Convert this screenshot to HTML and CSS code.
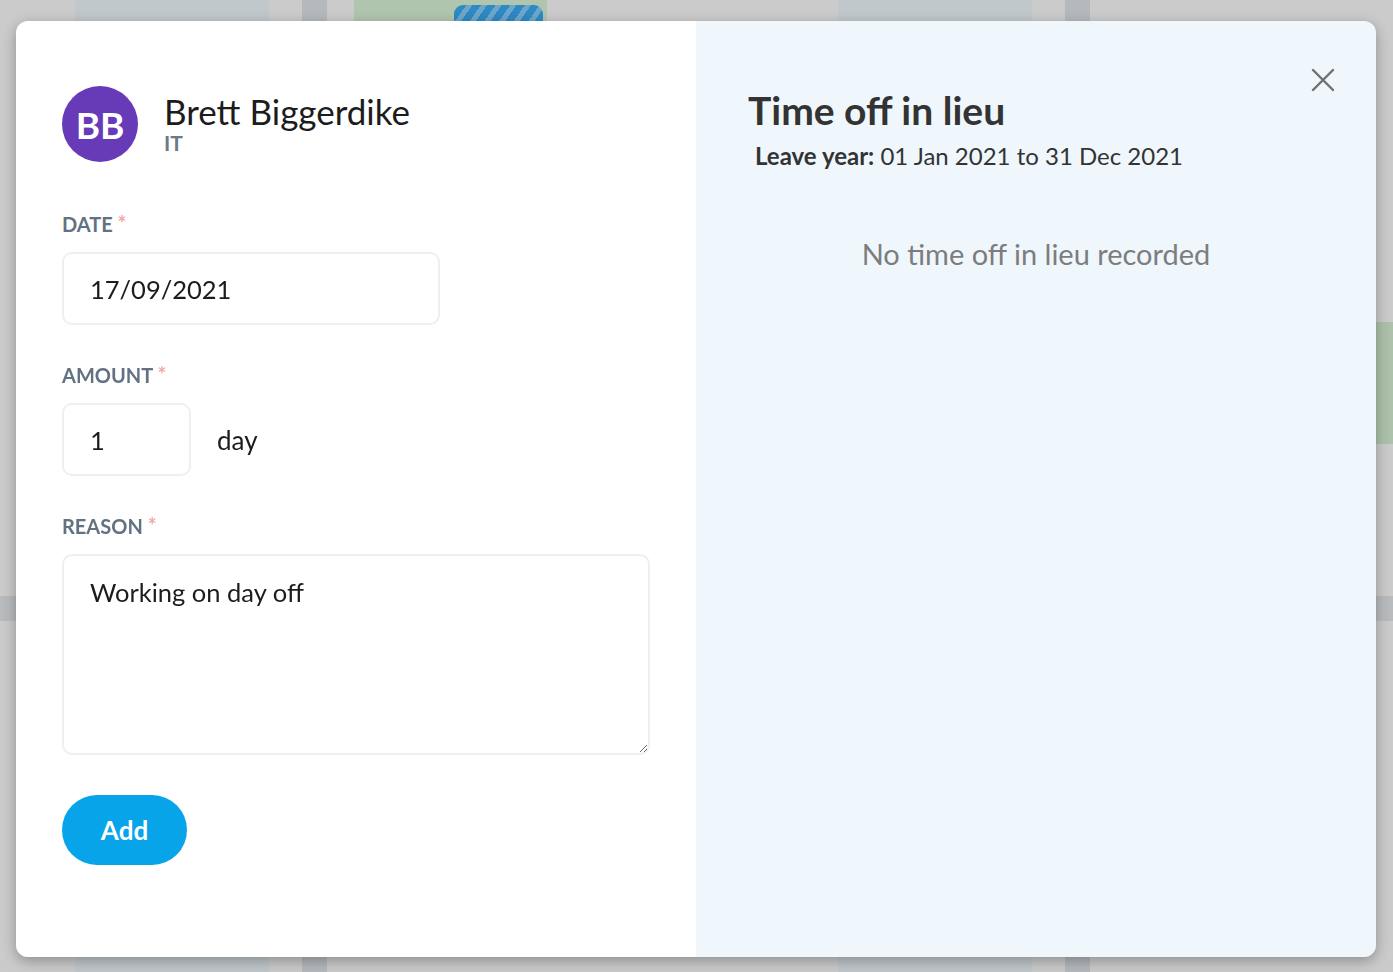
FILE: index.html
```html
<!DOCTYPE html>
<html lang="en">
<head>
  <meta charset="UTF-8" />
  <meta name="viewport" content="width=device-width, initial-scale=1.0"/>
  <title>Time off in lieu</title>
  <link rel="stylesheet" href="styles.css">
</head>
<body>
  <div class="backdrop">
    <div class="bg-row bg-top">
      <span class="blk blk-wide"></span>
      <span class="blk blk-narrow"></span>
      <span class="blk blk-green"><span class="stripe-pill"></span></span>
      <span class="blk blk-gap"></span>
      <span class="blk blk-wide"></span>
      <span class="blk blk-narrow"></span>
    </div>
    <div class="bg-mid">
      <div class="bg-space-a"></div>
      <div class="bg-green-row"><span class="bg-green-side"></span></div>
      <div class="bg-space-b"></div>
      <div class="bg-band"></div>
    </div>
    <div class="bg-row bg-bottom">
      <span class="blk blk-wide"></span>
      <span class="blk blk-narrow"></span>
      <span class="blk blk-plain"></span>
      <span class="blk blk-gap"></span>
      <span class="blk blk-wide"></span>
      <span class="blk blk-narrow"></span>
    </div>
  </div>

  <div class="modal">
    <section class="form-panel">
      <div class="person">
        <div class="avatar">BB</div>
        <div class="person-info">
          <div class="person-name">Brett Biggerdike</div>
          <div class="person-dept">IT</div>
        </div>
      </div>

      <div class="field">
        <label class="field-label">DATE <span class="req">*</span></label>
        <input class="input input-date" type="text" value="17/09/2021" />
      </div>

      <div class="field">
        <label class="field-label">AMOUNT <span class="req">*</span></label>
        <div class="amount-row">
          <input class="input input-amount" type="text" value="1" />
          <span class="unit">day</span>
        </div>
      </div>

      <div class="field">
        <label class="field-label">REASON <span class="req">*</span></label>
        <textarea class="input input-reason">Working on day off</textarea>
      </div>

      <button class="btn-add" type="button">Add</button>
    </section>

    <section class="info-panel">
      <div class="info-head">
        <div>
          <h2 class="info-title">Time off in lieu</h2>
          <p class="leave-year"><strong>Leave year:</strong> 01 Jan 2021 to 31 Dec 2021</p>
        </div>
        <button class="close" type="button" aria-label="Close">
          <svg width="24" height="24" viewBox="0 0 24 24">
            <path d="M2 2 L22 22 M22 2 L2 22" stroke="#6f6f6f" stroke-width="2.4" fill="none" stroke-linecap="round"/>
          </svg>
        </button>
      </div>
      <p class="empty">No time off in lieu recorded</p>
    </section>
  </div>
</body>
</html>
```

FILE: styles.css
```css
* {
  margin: 0;
  padding: 0;
  box-sizing: border-box;
}

body {
  height: 100vh;
  background: #cbcbcb;
  font-family: 'Lato', 'Open Sans', sans-serif;
  overflow: hidden;
}

/* dimmed page behind the dialog */
.backdrop {
  height: 100%;
  display: flex;
  flex-direction: column;
}

.bg-row {
  display: flex;
  padding-left: 75px;
}

.bg-top { height: 21px; }
.bg-bottom { height: 15px; }

.blk { display: block; height: 100%; }
.blk-wide { width: 194px; background: #c0c8cb; margin-right: 33px; }
.blk-narrow { width: 25px; background: #b5b8bc; margin-right: 27px; }
.blk-green { width: 193px; background: #b0c5ae; padding: 5px 0 0 100px; }
.blk-plain { width: 193px; }
.blk-gap { width: 291px; }

.stripe-pill {
  display: block;
  width: 89px;
  height: 100%;
  border-radius: 9px 9px 0 0;
  background: repeating-linear-gradient(-55deg, #2d8ac4 0 7px, #6ea6cb 7px 12px);
}

.bg-mid {
  flex: 1;
  display: flex;
  flex-direction: column;
}

.bg-space-a { height: 301px; }
.bg-green-row { height: 122px; display: flex; justify-content: flex-end; }
.bg-green-side { width: 40px; background: #adc2ab; }
.bg-space-b { height: 152px; }
.bg-band { height: 25px; background: #b8bcbf; }

/* dialog */
.modal {
  position: fixed;
  top: 21px;
  left: 16px;
  width: 1360px;
  height: 936px;
  display: flex;
  border-radius: 12px;
  overflow: hidden;
  box-shadow: 0 4px 14px rgba(0, 0, 0, 0.3);
}

.form-panel {
  width: 680px;
  background: #fff;
  padding: 65px 46px 0;
}

.person {
  display: flex;
  align-items: center;
  gap: 26px;
  margin-bottom: 50px;
}

.avatar {
  width: 76px;
  height: 76px;
  border-radius: 50%;
  background: #673ab7;
  color: #fff;
  font-weight: 700;
  font-size: 37px;
  display: flex;
  align-items: center;
  justify-content: center;
}

.person-name {
  font-size: 35px;
  line-height: 36px;
  color: #1c1c1c;
  margin-top: -1px;
}

.person-dept {
  font-size: 21px;
  line-height: 24px;
  color: #6a7a88;
  font-weight: 700;
  margin-top: 2px;
}

.field {
  display: flex;
  flex-direction: column;
  align-items: flex-start;
  margin-bottom: 38px;
}

.field-label {
  font-size: 20px;
  line-height: 24px;
  font-weight: 700;
  color: #627282;
  margin-bottom: 16px;
}

.req {
  color: #f3a6a6;
  font-size: 21px;
  vertical-align: top;
  line-height: 22px;
}

.input {
  font-family: inherit;
  font-size: 25.5px;
  color: #1c1c1c;
  border: 2px solid #efefef;
  border-radius: 10px;
  background: #fff;
  padding: 0 26px;
  outline: none;
}

.input-date {
  width: 378px;
  height: 73px;
}

.amount-row {
  display: flex;
  align-items: center;
  gap: 26px;
}

.input-amount {
  width: 129px;
  height: 73px;
}

.unit {
  font-size: 26px;
  color: #1c1c1c;
}

.input-reason {
  width: 588px;
  height: 201px;
  padding: 19px 26px;
  line-height: 34px;
  resize: vertical;
}

.btn-add {
  width: 125px;
  height: 70px;
  margin-top: 2px;
  border: none;
  border-radius: 35px;
  background: #07a4ea;
  color: #fff;
  font-family: inherit;
  font-size: 26px;
  font-weight: 700;
  cursor: pointer;
}

.info-panel {
  flex: 1;
  background: #eff7fd;
  padding: 66px 38px 0 52px;
}

.info-head {
  display: flex;
  justify-content: space-between;
  align-items: flex-start;
}

.info-title {
  font-size: 39px;
  line-height: 46px;
  font-weight: 700;
  color: #333;
}

.leave-year {
  font-size: 24px;
  line-height: 30px;
  color: #333;
  margin: 8px 0 0 7px;
}

.close {
  border: none;
  background: none;
  cursor: pointer;
  margin: -19px 3px 0 0;
  padding: 0;
}

.empty {
  text-align: center;
  font-size: 29px;
  color: #7d7d7d;
  margin: 65px -38px 0 -52px;
}
```
